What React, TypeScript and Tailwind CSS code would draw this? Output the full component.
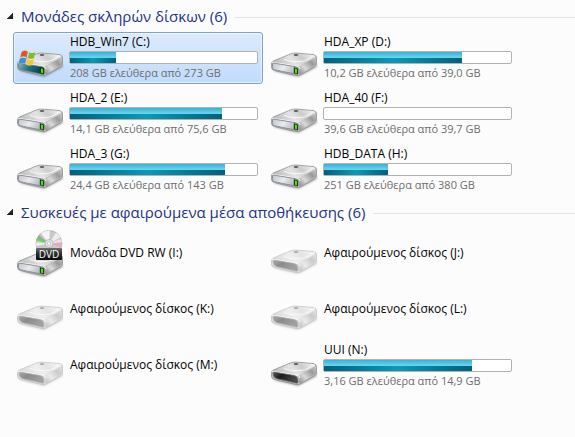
import { useState } from 'react';
import { clsx } from 'clsx';

type IconKind = 'system' | 'hdd' | 'dvd' | 'empty' | 'removable';

interface Drive {
  id: string;
  name: string;
  icon: IconKind;
  used?: number;
  space?: string;
}

const hardDisks: Drive[] = [
  { id: 'c', name: 'HDB_Win7 (C:)', icon: 'system', used: 24.5, space: '208 GB ελεύθερα από 273 GB' },
  { id: 'd', name: 'HDA_XP (D:)', icon: 'hdd', used: 73.8, space: '10,2 GB ελεύθερα από 39,0 GB' },
  { id: 'e', name: 'HDA_2 (E:)', icon: 'hdd', used: 81.3, space: '14,1 GB ελεύθερα από 75,6 GB' },
  { id: 'f', name: 'HDA_40 (F:)', icon: 'hdd', used: 0, space: '39,6 GB ελεύθερα από 39,7 GB' },
  { id: 'g', name: 'HDA_3 (G:)', icon: 'hdd', used: 82.9, space: '24,4 GB ελεύθερα από 143 GB' },
  { id: 'h', name: 'HDB_DATA (H:)', icon: 'hdd', used: 34, space: '251 GB ελεύθερα από 380 GB' },
];

const removableDevices: Drive[] = [
  { id: 'i', name: 'Μονάδα DVD RW (I:)', icon: 'dvd' },
  { id: 'j', name: 'Αφαιρούμενος δίσκος (J:)', icon: 'empty' },
  { id: 'k', name: 'Αφαιρούμενος δίσκος (K:)', icon: 'empty' },
  { id: 'l', name: 'Αφαιρούμενος δίσκος (L:)', icon: 'empty' },
  { id: 'm', name: 'Αφαιρούμενος δίσκος (M:)', icon: 'empty' },
  { id: 'n', name: 'UUI (N:)', icon: 'removable', used: 79, space: '3,16 GB ελεύθερα από 14,9 GB' },
];

// Gradients shared by all the drive icons
function IconDefs() {
  return (
    <svg width="0" height="0" className="absolute" aria-hidden="true">
      <defs>
        <linearGradient id="top" x1="0" y1="0.6" x2="1" y2="0.3">
          <stop offset="0" stopColor="#b8b8b8" />
          <stop offset="0.45" stopColor="#e4e4e4" />
          <stop offset="0.7" stopColor="#cccccc" />
          <stop offset="1" stopColor="#f0f0f0" />
        </linearGradient>
        <linearGradient id="side" x1="0" y1="1" x2="1" y2="0">
          <stop offset="0" stopColor="#868686" />
          <stop offset="0.35" stopColor="#dadada" />
          <stop offset="0.7" stopColor="#9a9a9a" />
          <stop offset="1" stopColor="#cacaca" />
        </linearGradient>
        <linearGradient id="front" x1="0" y1="0" x2="1" y2="0.3">
          <stop offset="0" stopColor="#c4c6cc" />
          <stop offset="0.5" stopColor="#e8eaf0" />
          <stop offset="1" stopColor="#b4b6be" />
        </linearGradient>
        <linearGradient id="frontSystem" x1="0" y1="0" x2="1" y2="0.2">
          <stop offset="0" stopColor="#8fb0b8" />
          <stop offset="0.45" stopColor="#1f7484" />
          <stop offset="1" stopColor="#093f48" />
        </linearGradient>
        <linearGradient id="slot" x1="0" y1="0" x2="1" y2="0.4">
          <stop offset="0" stopColor="#5a5a5a" />
          <stop offset="0.4" stopColor="#1c1c1c" />
          <stop offset="1" stopColor="#4a4a4a" />
        </linearGradient>
        <linearGradient id="band" x1="0" y1="0" x2="0" y2="1">
          <stop offset="0" stopColor="#707070" />
          <stop offset="0.4" stopColor="#333" />
          <stop offset="1" stopColor="#0a0a0a" />
        </linearGradient>
        <filter id="soft" x="-20%" y="-50%" width="140%" height="200%">
          <feGaussianBlur stdDeviation="1" />
        </filter>
      </defs>
    </svg>
  );
}

function DriveBody({ kind }: { kind: IconKind }) {
  const isSlot = kind === 'empty' || kind === 'removable';
  const front = kind === 'system' ? 'url(#frontSystem)' : isSlot ? 'url(#slot)' : 'url(#front)';

  return (
    <>
      <path d="M3 37 L28 43 L47 33 L46 30 Z" fill="#000" opacity="0.3" filter="url(#soft)" />
      <path d="M1.500 30 Q1.500 27.500 4 26.700 L21 19.800 Q23 19 25.500 19 L43 20.500 Q46.500 21 46.500 23.500 L46.500 30 Q46.500 31.500 45 32.500 L31 40.800 Q28.500 42.200 26 41.500 L4 36.500 Q1.500 35.700 1.500 33.500 Z" fill="#bababa" stroke="#858585" strokeWidth="0.7" />
      <path d="M2.500 28 L21 20.200 Q23 19.400 25.500 19.500 L43 21 Q46 21.500 45 23 L30 32 Q28.500 32.700 26 32.200 L4 28.600 Z" fill="url(#top)" />
      <path d="M30.500 32.300 L46 23.500 L46 30.300 L31 40 Q29.500 41 29.300 38.500 L29.300 34 Z" fill="url(#side)" />
      <path d="M14 25.500 Q22 29 31 27.500 Q39 26 42 22" fill="none" stroke="#fff" strokeWidth="1" opacity="0.8" />
      <ellipse cx="26" cy="21" rx="2.300" ry="0.900" fill="#5c5c5c" />
      <path d="M2 28.300 Q15 29.800 27 32.300 Q30 33.100 30 35" fill="none" stroke="#fff" strokeWidth="0.8" />
      <path
        d={isSlot
          ? 'M3 29.800 Q3 29 5 29.200 L24 32.500 Q27 33.200 27.500 35.500 L28 39 Q28 40.500 26 40 L7 35.700 Q4 34.700 3.500 32.700 Z'
          : 'M2.500 29.800 Q2.500 29 4 29.200 L26 32.800 Q28.300 33.300 28.300 35 L28.300 39.200 Q28.300 40.700 26.500 40.300 L4.500 35.700 Q2.500 35.200 2.500 33.300 Z'}
        fill={front}
        stroke={isSlot ? '#666' : '#777a84'}
        strokeWidth="0.7"
      />
      {!isSlot && (
        <>
          <path d="M23.800 33.300 L27 33.900 Q28 34.200 28 35.200 L28 40.200 L23.800 39.300 Z" fill="#16400c" />
          <path d="M25 34.500 L27 35 L27 39.300 L25 38.800 Z" fill="#4fe01c" />
        </>
      )}
    </>
  );
}

function WindowsFlag() {
  return (
    <g stroke="#fff" strokeWidth="0.3" strokeOpacity="0.5">
      <path d="M5.500 18 Q8.500 15.500 12 17.500 L10.700 23.500 Q7.500 21.500 4 23.500 Z" fill="#dd5527" />
      <path d="M13 18 Q16 19.800 19.500 18 L18.200 24 Q15 25.800 11.700 24 Z" fill="#7dbb2f" />
      <path d="M3.700 24.500 Q7 22.500 10.400 24.500 L9.200 30 Q6 28.200 2.500 30 Z" fill="#3d8fd6" />
      <path d="M11.400 25 Q14.700 26.800 18 25 L16.700 30.700 Q13.500 32.300 10.200 30.700 Z" fill="#f7c52c" />
    </g>
  );
}

function DvdDisc() {
  return (
    <g>
      <circle cx="33" cy="13.500" r="13" fill="#c9c9c9" stroke="#a0a0a0" strokeWidth="0.6" />
      <path d="M33 13.500 L25 3.300 A13 13 0 0 1 34 0.600 Z" fill="#f4f4f4" />
      <path d="M33 13.500 L40 2.600 A13 13 0 0 1 44.500 7.500 Z" fill="#ededed" />
      <path d="M33 13.500 L20.700 9.500 A13 13 0 0 1 23 5.200 Z" fill="#a4a4a4" />
      <path d="M33 13.500 L20.500 10.300 L21.500 8 Z" fill="#4fe53a" />
      <path d="M33 13.500 L20.300 16 L20.100 12.500 Z" fill="#efefef" />
      <path d="M33 13.500 L46 13 L45.500 17 Z" fill="#e9a6c6" />
      <path d="M33 13.500 L45 9 L46 12 Z" fill="#f3dfe8" />
      <circle cx="33" cy="13.500" r="4" fill="#e6e6e6" stroke="#aaa" strokeWidth="0.7" />
      <circle cx="33" cy="13.500" r="1.700" fill="#fafafa" stroke="#999" strokeWidth="0.5" />
      <rect x="20" y="18" width="26" height="12" rx="1" fill="url(#band)" />
      <text x="33" y="27.500" textAnchor="middle" fontSize="10" fill="#fff" className="font-['Open_Sans',sans-serif]">
        DVD
      </text>
    </g>
  );
}

function DriveIcon({ kind }: { kind: IconKind }) {
  return (
    <svg viewBox="0 0 48 48" className="size-12 shrink-0" aria-hidden="true">
      <g
        transform={kind === 'dvd' ? 'translate(0 4)' : kind === 'empty' || kind === 'removable' ? 'translate(0 1)' : undefined}
        opacity={kind === 'empty' ? 0.5 : 1}
      >
        <DriveBody kind={kind} />
      </g>
      {kind === 'system' && <WindowsFlag />}
      {kind === 'dvd' && <DvdDisc />}
    </svg>
  );
}

function CapacityBar({ used, label }: { used: number; label: string }) {
  return (
    <div
      role="progressbar"
      aria-label={label}
      aria-valuenow={used}
      aria-valuemin={0}
      aria-valuemax={100}
      className="mt-px -ml-px h-[13px] rounded-[2px] border border-[#b2b2b2] bg-white"
    >
      <div className="flex h-full flex-col" style={{ width: `${used}%` }}>
        <div className="h-1.5 bg-linear-to-b from-[#3bb0d2] to-[#68d8f2]" />
        <div className="flex-1 bg-linear-to-r from-[#045f7e] via-[#0a9ab6] to-[#045f7e]" />
      </div>
    </div>
  );
}

function DriveTile({ drive, selected, onSelect }: { drive: Drive; selected: boolean; onSelect: () => void }) {
  return (
    <button
      type="button"
      aria-pressed={selected}
      onClick={onSelect}
      className={clsx(
        'flex h-[52px] items-center rounded-[3px] border pr-1 pl-0.5 text-left',
        selected
          ? 'border-[#7da2ce] bg-linear-to-b from-[#dcebfc] to-[#c1dbfc] shadow-[inset_0_0_0_1px_rgba(255,255,255,0.5)]'
          : 'border-transparent',
      )}
    >
      <DriveIcon kind={drive.icon} />
      <div className={clsx('ml-1.5 min-w-0 flex-1', drive.space ? 'pb-px' : 'pb-0.5')}>
        <div className="text-xs leading-4 whitespace-nowrap text-black">{drive.name}</div>
        {drive.used !== undefined && (
          <>
            <CapacityBar used={drive.used} label={drive.name} />
            <div className="mt-px text-[11px] leading-4 whitespace-nowrap text-[#6d6d6d]">{drive.space}</div>
          </>
        )}
      </div>
    </button>
  );
}

interface GroupProps {
  title: string;
  drives: Drive[];
  selectedId: string;
  onSelect: (id: string) => void;
}

function DriveGroup({ title, drives, selectedId, onSelect }: GroupProps) {
  const [open, setOpen] = useState(true);

  return (
    <section>
      <h2 className="flex h-8 items-center gap-2 pl-[7px]">
        <button type="button" aria-expanded={open} onClick={() => setOpen(!open)} className="flex items-center gap-2">
          <svg viewBox="0 0 6 6" className="size-1.5" aria-hidden="true">
            <path d="M6 0 V6 H0 Z" fill="#262626" stroke="#000" strokeWidth="0.5" />
          </svg>
          <span className="text-[15px] leading-6 whitespace-nowrap text-[#1e3287]">{title}</span>
        </button>
        <span className="mt-0.5 h-px flex-1 bg-[#e2e2e2]" />
      </h2>
      {open && (
        <div className="grid grid-cols-[repeat(auto-fill,250px)] gap-1 pl-[13px]">
          {drives.map((drive) => (
            <DriveTile
              key={drive.id}
              drive={drive}
              selected={drive.id === selectedId}
              onSelect={() => onSelect(drive.id)}
            />
          ))}
        </div>
      )}
    </section>
  );
}

export default function App() {
  const [selectedId, setSelectedId] = useState('c');

  return (
    <main className="min-h-screen bg-[#fcfcfc] font-['Open_Sans','Noto_Sans',sans-serif]">
      <IconDefs />
      <DriveGroup title="Μονάδες σκληρών δίσκων (6)" drives={hardDisks} selectedId={selectedId} onSelect={setSelectedId} />
      <DriveGroup
        title="Συσκευές με αφαιρούμενα μέσα αποθήκευσης (6)"
        drives={removableDevices}
        selectedId={selectedId}
        onSelect={setSelectedId}
      />
    </main>
  );
}
